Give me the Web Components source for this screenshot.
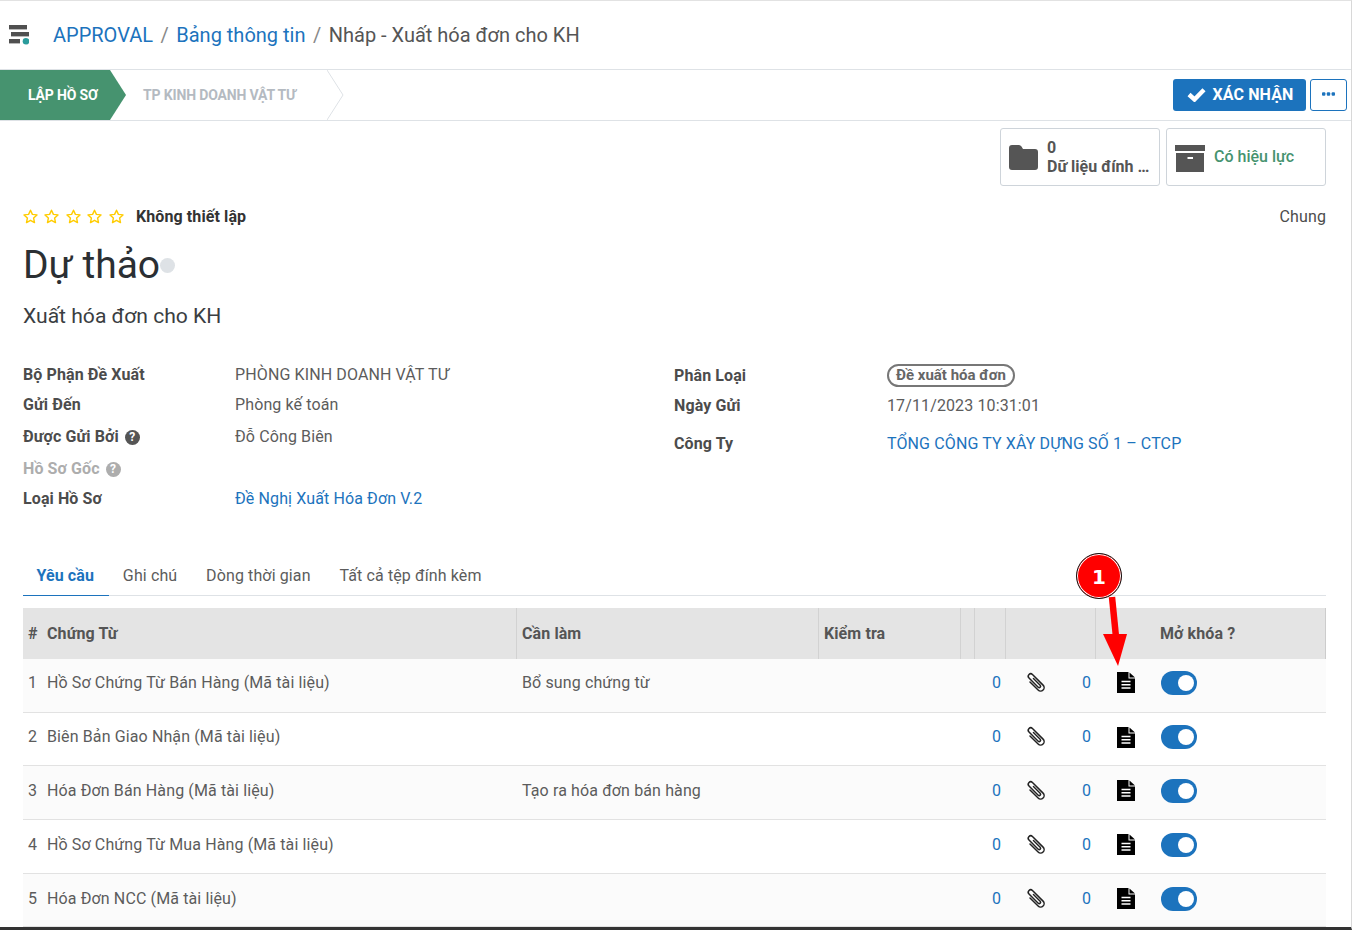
<!DOCTYPE html>
<html lang="vi">
<head>
<meta charset="utf-8">
<title>Nháp - Xuất hóa đơn cho KH</title>
<style>
  html, body { margin: 0; height: 930px; overflow: hidden; background: #fff; }
  body { font: 16px/1.5 Roboto, "Liberation Sans", sans-serif; letter-spacing: .12px; color: #4c4c4c; }
</style>
</head>
<body>
<app-shell>
  <top-bar>
    <a slot="crumb" class="link">APPROVAL</a>
    <a slot="crumb" class="link">Bảng thông tin</a>
    <span slot="crumb">Nháp - Xuất hóa đơn cho KH</span>
  </top-bar>

  <status-bar>
    <status-step active>LẬP HỒ SƠ</status-step>
    <status-step>TP KINH DOANH VẬT TƯ</status-step>
  </status-bar>

  <form-sheet>
    <stat-box slot="stats" icon="folder"><b>0</b><br><b>Dữ liệu đính …</b></stat-box>
    <stat-box slot="stats" icon="archive" tone="green">Có hiệu lực</stat-box>

    <rating-row slot="rating">Không thiết lập</rating-row>
    <span slot="kind">Chung</span>

    <title-block slot="title" sub="Xuất hóa đơn cho KH">Dự thảo</title-block>

    <field-row slot="left" label="Bộ Phận Đề Xuất" h="30">PHÒNG KINH DOANH VẬT TƯ</field-row>
    <field-row slot="left" label="Gửi Đến" h="30">Phòng kế toán</field-row>
    <field-row slot="left" label="Được Gửi Bởi" h="34" help>Đỗ Công Biên</field-row>
    <field-row slot="left" label="Hồ Sơ Gốc" h="30" help muted></field-row>
    <field-row slot="left" label="Loại Hồ Sơ" h="30" link>Đề Nghị Xuất Hóa Đơn V.2</field-row>

    <field-row slot="right" label="Phân Loại" h="31" w="213" pill>Đề xuất hóa đơn</field-row>
    <field-row slot="right" label="Ngày Gửi" h="30" w="213">17/11/2023 10:31:01</field-row>
    <field-row slot="right" label="Công Ty" h="46" w="213" link>TỔNG CÔNG TY XÂY DỰNG SỐ 1 – CTCP</field-row>

    <tab-strip slot="tabs">
      <tab-item active>Yêu cầu</tab-item>
      <tab-item>Ghi chú</tab-item>
      <tab-item>Dòng thời gian</tab-item>
      <tab-item>Tất cả tệp đính kèm</tab-item>
    </tab-strip>

    <doc-head slot="table"></doc-head>
    <doc-row slot="table" n="1" pb="5.6" name="Hồ Sơ Chứng Từ Bán Hàng (Mã tài liệu)" todo="Bổ sung chứng từ" striped></doc-row>
    <doc-row slot="table" n="2" pb="4" name="Biên Bản Giao Nhận (Mã tài liệu)"></doc-row>
    <doc-row slot="table" n="3" pb="4" name="Hóa Đơn Bán Hàng (Mã tài liệu)" todo="Tạo ra hóa đơn bán hàng" striped></doc-row>
    <doc-row slot="table" n="4" pb="3" name="Hồ Sơ Chứng Từ Mua Hàng (Mã tài liệu)"></doc-row>
    <doc-row slot="table" n="5" pb="3" name="Hóa Đơn NCC (Mã tài liệu)" striped></doc-row>
  </form-sheet>

  <step-marker>1</step-marker>
</app-shell>

<script>
const BLUE = "#1c73bd";
const GRID = "18px 475px 302px 142px 14px 31px 90px 60px 171px";

// small helper, every element below just sets its shadow html once
class Base extends HTMLElement {
    constructor() {
        super();
        this.attachShadow({ mode: "open" });
    }
    connectedCallback() {
        this.shadowRoot.innerHTML = this.render();
    }
}

class AppShell extends Base {
    render() {
        return `
      <style>
        :host {
          display: flex;
          flex-direction: column;
          position: relative;
          height: 930px;
          box-sizing: border-box;
          border-top: 1px solid #e2e2e2;
          border-right: 1px solid #d8d8d8;
          border-bottom: 3px solid #333;
          overflow: hidden;
        }
      </style>
      <slot></slot>
    `;
    }
}

class TopBar extends Base {
    render() {
        return `
      <style>
        :host {
          display: flex;
          align-items: center;
          flex: none;
          height: 68px;
          border-bottom: 1px solid #dee2e6;
          font-size: 20px;
          letter-spacing: 0;
          color: #555;
        }
        svg { margin: 0 24px 0 9px; flex: none; }
        .crumbs { display: flex; align-items: center; }
        ::slotted(.link) { color: #1c73bd; }
      </style>
      <svg width="20" height="20" viewBox="0 0 20 20">
        <rect x="0" y="0" width="18" height="4.4" fill="#505050"/>
        <rect x="2" y="7" width="18" height="4.4" fill="#505050"/>
        <rect x="0" y="14" width="11" height="4.4" fill="#505050"/>
        <circle cx="17" cy="16.3" r="3.3" fill="#2b9c9c"/>
      </svg>
      <div class="crumbs">
        <slot name="crumb"></slot>
      </div>
    `;
    }
    connectedCallback() {
        super.connectedCallback();
        // separators between crumbs go in the light dom so they keep the order
        const crumbs = [...this.querySelectorAll("[slot=crumb]")];
        crumbs.slice(0, -1).forEach((c) => {
            const s = document.createElement("span");
            s.slot = "crumb";
            s.textContent = "/";
            s.style.cssText = "color:#888;padding:0 7.5px";
            c.after(s);
        });
    }
}

class StatusBar extends Base {
    render() {
        return `
      <style>
        :host {
          display: flex;
          flex: none;
          height: 50px;
          border-bottom: 1px solid #dee2e6;
          position: relative;
        }
      </style>
      <slot></slot>
      <action-buttons></action-buttons>
    `;
    }
}

class StatusStep extends Base {
    render() {
        const on = this.hasAttribute("active");
        return `
      <style>
        :host {
          display: flex;
          align-items: center;
          height: 50px;
          position: relative;
          font-size: 14px;
          font-weight: 700;
          letter-spacing: -0.15px;
          box-sizing: border-box;
          color: ${on ? "#fff" : "#b4bac1"};
          width: ${on ? "110px" : "217px"};
          padding-left: ${on ? "28px" : "33px"};
          background: ${on ? "#46936f" : "transparent"};
          white-space: nowrap;
        }
        svg { position: absolute; left: 100%; top: 0; }
      </style>
      <slot></slot>
      <svg width="17" height="50" viewBox="0 0 17 50">
        ${on
            ? '<path d="M0 0 L16 25 L0 50 Z" fill="#46936f"/>'
            : '<path d="M0 0 L16 25 L0 50" fill="none" stroke="#dee2e6"/>'}
      </svg>
    `;
    }
}

class ActionButtons extends Base {
    render() {
        return `
      <style>
        :host {
          display: flex;
          gap: 4px;
          position: absolute;
          right: 4px;
          top: 9px;
        }
        button {
          height: 32px;
          box-sizing: border-box;
          border-radius: 3px;
          font: 700 16px Roboto, sans-serif;
          letter-spacing: .1px;
          display: flex;
          align-items: center;
          justify-content: center;
          padding: 0 0 2px;
        }
        .primary { width: 133px; background: ${BLUE}; border: 0; color: #fff; gap: 7px; padding-left: 1px; }
        .more { width: 37px; background: #fff; border: 1px solid ${BLUE}; }
      </style>
      <button class="primary">
        <svg width="19" height="15" viewBox="0 0 19 15"><path d="M2 7.5 L7.5 12.5 L17 2.8" fill="none" stroke="#fff" stroke-width="4.4"/></svg>
        XÁC NHẬN
      </button>
      <button class="more">
        <svg width="13" height="4" viewBox="0 0 13 4" fill="${BLUE}">
          <rect width="3.4" height="3.4" y=".3" rx="1"/><rect x="4.8" y=".3" width="3.4" height="3.4" rx="1"/><rect x="9.6" y=".3" width="3.4" height="3.4" rx="1"/>
        </svg>
      </button>
    `;
    }
}

class FormSheet extends Base {
    render() {
        return `
      <style>
        :host {
          display: block;
          padding: 0 25px 0 23px;
        }
        .stats { display: flex; justify-content: flex-end; gap: 6px; margin-top: 7px; }
        .meta {
          display: flex;
          justify-content: space-between;
          align-items: center;
          height: 24px;
          margin-top: 19px;
        }
        .fields {
          display: grid;
          grid-template-columns: 651px 1fr;
          margin-top: 30px;
        }
        .tabs { margin-top: 42px; }
        .table { margin-top: 12px; }
      </style>
      <div class="stats"><slot name="stats"></slot></div>
      <div class="meta"><slot name="rating"></slot><slot name="kind"></slot></div>
      <slot name="title"></slot>
      <div class="fields">
        <div><slot name="left"></slot></div>
        <div><slot name="right"></slot></div>
      </div>
      <div class="tabs"><slot name="tabs"></slot></div>
      <div class="table"><slot name="table"></slot></div>
    `;
    }
}

class StatBox extends Base {
    render() {
        const folder = `<svg width="29" height="25" viewBox="0 0 29 25" fill="#555">
            <path d="M3 0 H10 Q11.5 0 12.5 1.5 L14 4 H26 Q29 4 29 7 V22 Q29 25 26 25 H3 Q0 25 0 22 V3 Q0 0 3 0 Z"/></svg>`;
        const archive = `<svg style="margin-top:3px" width="30" height="27" viewBox="0 0 30 27" fill="#555">
            <rect width="30" height="6"/>
            <path fill-rule="evenodd" d="M1 8 H29 V27 H1 Z M12.5 12 V14 H18 V12 Z"/></svg>`;
        const green = this.getAttribute("tone") === "green";
        return `
      <style>
        :host {
          display: flex;
          align-items: center;
          gap: 9px;
          width: 160px;
          height: 58px;
          box-sizing: border-box;
          padding-left: 8px;
          border: 1px solid #ced4da;
          border-radius: 3px;
          line-height: 19px;
          letter-spacing: 0;
          color: ${green ? "#46936f" : "#555"};
          font-weight: ${green ? 500 : 400};
          white-space: nowrap;
        }
        ::slotted(b) { font-weight: 700; }
        div { margin-bottom: ${green ? 2 : 0}px; }
      </style>
      ${green ? archive : folder}
      <div><slot></slot></div>
    `;
    }
}

class RatingRow extends Base {
    render() {
        const star = `<svg width="15" height="15" viewBox="0 0 15 15">
            <path d="M7.5 1.2 L9.4 5.4 L14 5.9 L10.6 9 L11.5 13.6 L7.5 11.3 L3.5 13.6 L4.4 9 L1 5.9 L5.6 5.4 Z"
              fill="none" stroke="#fc0" stroke-width="1.4" stroke-linejoin="round"/></svg>`;
        return `
      <style>
        :host { display: flex; align-items: center; color: #333; font-weight: 700; letter-spacing: .1px; }
        .stars { display: flex; gap: 6.4px; margin: 0 12.4px 2px 0; }
        svg { display: block; }
      </style>
      <div class="stars">${star.repeat(5)}</div>
      <slot></slot>
    `;
    }
}

class TitleBlock extends Base {
    render() {
        return `
      <style>
        :host { display: block; color: #2b2f33; letter-spacing: 0; }
        h1 {
          display: flex;
          align-items: center;
          margin: 13px 0 0;
          height: 46px;
          font: 400 39px/46px Roboto, sans-serif;
        }
        i { width: 15px; height: 15px; border-radius: 50%; background: #dee2e6; }
        p { margin: 14px 0 0; font: 400 21.1px/28px Roboto, sans-serif; color: #3a3e42; }
      </style>
      <h1><slot></slot><i></i></h1>
      <p>${this.getAttribute("sub")}</p>
    `;
    }
}

class FieldRow extends Base {
    render() {
        const muted = this.hasAttribute("muted");
        const help = this.hasAttribute("help")
            ? `<span class="help">?</span>` : "";
        const pill = this.hasAttribute("pill");
        return `
      <style>
        :host {
          display: grid;
          grid-template-columns: ${this.getAttribute("w") || 212}px 1fr;
          align-items: center;
          height: ${this.getAttribute("h")}px;
        }
        .label {
          display: flex;
          align-items: center;
          gap: 6px;
          font-weight: 700;
          letter-spacing: .1px;
          color: ${muted ? "#adadad" : "#4c4c4c"};
        }
        .help {
          display: inline-flex;
          align-items: center;
          justify-content: center;
          width: 15px;
          height: 15px;
          border-radius: 50%;
          background: ${muted ? "#adadad" : "#555"};
          color: #fff;
          font: 700 12px/15px Roboto, sans-serif;
        }
        .value { color: ${this.hasAttribute("link") ? BLUE : "#5c5c5c"}; }
        .pill {
          display: block;
          width: max-content;
          margin-bottom: 0;
          border: 2px solid #777;
          border-radius: 12px;
          padding: 0 7px;
          height: 19px;
          line-height: 19px;
          font-size: 15px;
          font-weight: 700;
          letter-spacing: 0;
          color: #666;
        }
      </style>
      <div class="label">${this.getAttribute("label")}${help}</div>
      <div class="value"><span class="${pill ? "pill" : ""}"><slot></slot></span></div>
    `;
    }
}

class TabStrip extends Base {
    render() {
        return `
      <style>
        :host { display: flex; height: 39px; border-bottom: 1px solid #dee2e6; }
      </style>
      <slot></slot>
    `;
    }
}

class TabItem extends Base {
    render() {
        const on = this.hasAttribute("active");
        return `
      <style>
        :host {
          display: block;
          padding: 8px 15.4px 0 ${on ? 13.4 : 14.4}px;
          margin-right: ${on ? -1 : 0}px;
          height: 40px;
          box-sizing: border-box;
          line-height: 24px;
          color: ${on ? BLUE : "#5c5c5c"};
          font-weight: ${on ? 700 : 400};
          border-bottom: ${on ? `1px solid ${BLUE}` : "0"};
        }
        :host(:not([active])) { padding-right: 14.4px; }
      </style>
      <slot></slot>
    `;
    }
}

class DocHead extends Base {
    render() {
        return `
      <style>
        :host {
          display: grid;
          grid-template-columns: ${GRID};
          height: 51px;
          background: #e4e4e4;
          font-weight: 700;
          letter-spacing: .1px;
          color: #555;
          border-right: 1px solid #ccc;
        }
        div {
          display: flex;
          align-items: center;
          padding-left: 5px;
          box-sizing: border-box;
          white-space: nowrap;
        }
        .line { border-left: 1px solid #d2d2d2; }
        .wide { padding-left: 6px; }
      </style>
      <div>#</div>
      <div class="wide">Chứng Từ</div>
      <div class="line">Cần làm</div>
      <div class="line">Kiểm tra</div>
      <div class="line"></div>
      <div class="line"></div>
      <div class="line"></div>
      <div class="line"></div>
      <div>Mở khóa ?</div>
    `;
    }
}

class DocRow extends Base {
    render() {
        return `
      <style>
        :host {
          display: grid;
          grid-template-columns: ${GRID};
          height: 53.7px;
          box-sizing: border-box;
          padding-bottom: ${this.getAttribute("pb")}px;
          border-bottom: 1px solid #e2e2e2;
          align-items: center;
          color: #5c5c5c;
          background: ${this.hasAttribute("striped") ? "#fbfbfb" : "#fff"};
        }
        .n { padding-left: 5px; }
        .txt { padding-left: 6px; white-space: nowrap; }
        .num { color: ${BLUE}; text-align: right; padding-right: 4px; }
        .attach {
          display: flex;
          justify-content: space-between;
          align-items: center;
          padding: 0 4px 0 21px;
        }
        svg { overflow: visible; }
        .doc { padding-left: 22px; line-height: 0; }
        .tog { padding-left: 6px; line-height: 0; }
        .tog i {
          display: inline-block;
          position: relative;
          width: 36px;
          height: 24px;
          border-radius: 12px;
          background: ${BLUE};
        }
        .tog i::after {
          content: "";
          position: absolute;
          right: 3px;
          top: 4px;
          width: 16px;
          height: 16px;
          border-radius: 50%;
          background: #fff;
        }
      </style>
      <div class="n">${this.getAttribute("n")}</div>
      <div class="txt">${this.getAttribute("name")}</div>
      <div class="txt">${this.getAttribute("todo") || ""}</div>
      <div></div>
      <div></div>
      <div class="num">0</div>
      <div class="attach">
        <svg width="20" height="20" viewBox="0 0 20 20">
          <g transform="rotate(-45 10 10)">
            <path d="M6.5 5 V16.5 a3.5 3.5 0 0 0 7 0 V1.5 a2.45 2.45 0 0 0 -4.9 0 V14.5 a1.4 1.4 0 0 0 2.8 0 V5"
              fill="none" stroke="#222" stroke-width="1.5" stroke-linecap="round"/>
          </g>
        </svg>
        <span class="num" style="padding:0">0</span>
      </div>
      <div class="doc">
        <svg width="18" height="21" viewBox="0 0 18 21">
          <path d="M0 0 H11.5 V6.5 H18 V21 H0 Z" fill="#000"/>
          <path d="M12.5 .5 L18 5.5 H12.5 Z" fill="#000"/>
          <path d="M4.5 9.5 H13.5 M4.5 12.8 H13.5 M4.5 16 H13.5" stroke="#fff" stroke-width="1.4"/>
        </svg>
      </div>
      <div class="tog"><i></i></div>
    `;
    }
}

class StepMarker extends Base {
    render() {
        return `
      <style>
        :host {
          position: absolute;
          left: 1076px;
          top: 552px;
          width: 60px;
          height: 116px;
          pointer-events: none;
        }
        svg { position: absolute; left: 0; top: 0; }
        .dot {
          position: absolute;
          left: 0;
          top: 0;
          width: 46px;
          height: 46px;
          box-sizing: border-box;
          border-radius: 50%;
          background: #f00;
          border: 1.5px solid #111;
          box-shadow: inset 0 0 0 1px #fff;
          color: #fff;
          font: 700 20px/47px "DejaVu Sans", sans-serif;
          text-align: center;
        }
      </style>
      <svg width="60" height="116" viewBox="0 0 60 116">
        <path d="M36 44 L40 84" stroke="#f00" stroke-width="6.5"/>
        <path d="M27 81 L51 81 L42 113 Z" fill="#f00"/>
      </svg>
      <div class="dot"><slot></slot></div>
    `;
    }
}

customElements.define("app-shell", AppShell);
customElements.define("top-bar", TopBar);
customElements.define("status-bar", StatusBar);
customElements.define("status-step", StatusStep);
customElements.define("action-buttons", ActionButtons);
customElements.define("form-sheet", FormSheet);
customElements.define("stat-box", StatBox);
customElements.define("rating-row", RatingRow);
customElements.define("title-block", TitleBlock);
customElements.define("field-row", FieldRow);
customElements.define("tab-strip", TabStrip);
customElements.define("tab-item", TabItem);
customElements.define("doc-head", DocHead);
customElements.define("doc-row", DocRow);
customElements.define("step-marker", StepMarker);
</script>
</body>
</html>
